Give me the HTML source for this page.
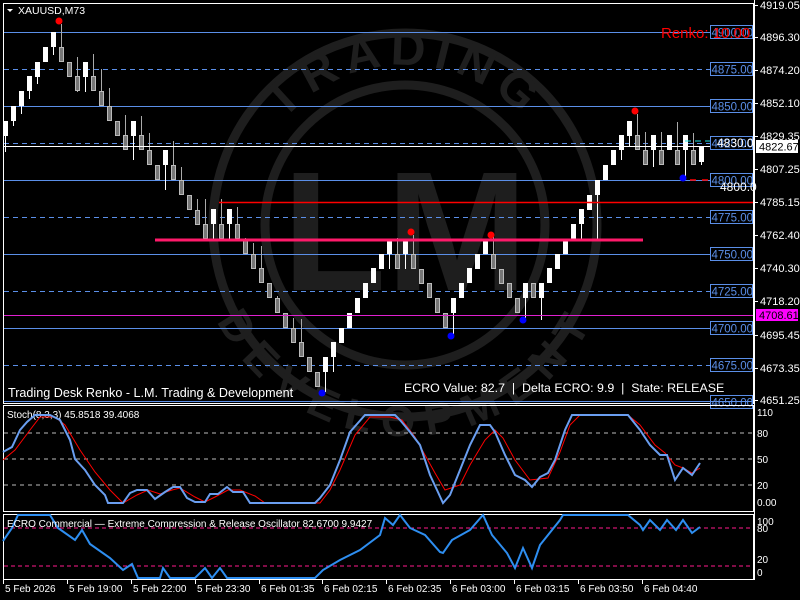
<!DOCTYPE html>
<html><head><meta charset="utf-8"><style>
html,body{margin:0;padding:0;background:#000;width:800px;height:600px;overflow:hidden}
svg{display:block;font-family:"Liberation Sans",sans-serif}
</style></head><body>
<svg id="s" width="800" height="600" viewBox="0 0 800 600" xmlns="http://www.w3.org/2000/svg">
<rect width="800" height="600" fill="#000"/>
<!-- watermark -->
<g fill="none" stroke="#1e1e1e" stroke-width="9">
<circle cx="405" cy="225" r="192"/>
<circle cx="405" cy="225" r="140"/>
</g>
<defs>
<path id="arcT" d="M245,225 A160,160 0 0 1 565,225"/>
<path id="arcB" d="M225,225 A180,180 0 0 0 585,225"/>
</defs>
<text font-size="48" fill="#1e1e1e" font-weight="bold" letter-spacing="8"><textPath href="#arcT" startOffset="50%" text-anchor="middle">TRADING</textPath></text>
<text font-size="44" fill="#1e1e1e" font-weight="bold" letter-spacing="6"><textPath href="#arcB" startOffset="50%" text-anchor="middle" dominant-baseline="hanging">DEVELOPMENT</textPath></text>
<text x="405" y="290" font-size="170" font-weight="bold" fill="#1e1e1e" text-anchor="middle">LM</text>

<!-- main frame -->
<rect x="3.5" y="3.5" width="750" height="400" fill="none" stroke="#fff"/>
<g id="grid"></g>
<g id="candles"></g>
<!-- special lines -->
<line x1="4" y1="146.5" x2="753" y2="146.5" stroke="#fff"/>
<line x1="219" y1="202.5" x2="753" y2="202.5" stroke="#f00" stroke-width="1.5"/>
<line x1="155" y1="240" x2="643" y2="240" stroke="#ff1a6a" stroke-width="3"/>
<line x1="4" y1="315.5" x2="753" y2="315.5" stroke="#e020d0"/>
<line x1="685" y1="141" x2="740" y2="141" stroke="#1ee0e0" stroke-dasharray="6,4"/>
<line x1="690" y1="180" x2="735" y2="180" stroke="#f00" stroke-dasharray="6,6" stroke-width="1.5"/>
<!-- dots -->
<g fill="#f00"><circle cx="59" cy="21" r="3.5"/><circle cx="411" cy="232" r="3.5"/><circle cx="491" cy="235" r="3.5"/><circle cx="635" cy="111" r="3.5"/></g>
<g fill="#00f"><circle cx="322" cy="393" r="3.5"/><circle cx="451" cy="336" r="3.5"/><circle cx="523" cy="320" r="3.5"/><circle cx="683" cy="178" r="3.5"/></g>
<!-- level label boxes -->
<g id="lbl" font-size="11.5" fill="#5b8fe8"></g>
<text x="661" y="38" font-size="15" fill="#f00">Renko: 10.00</text>
<text x="717" y="147" font-size="12" fill="#fff">4830.0</text>
<text x="720" y="191" font-size="12" fill="#fff">4800.0</text>
<!-- top-left -->
<path d="M7,9 L13,9 L10,12 Z" fill="#fff"/>
<text x="18" y="14" font-size="10.5" fill="#fff">XAUUSD,M73</text>
<text x="8" y="397" font-size="12.6" fill="#fff">Trading Desk Renko - L.M. Trading &amp; Development</text>
<text x="404" y="392" font-size="12.4" fill="#fff" xml:space="preserve">ECRO Value: 82.7  |  Delta ECRO: 9.9  |  State: RELEASE</text>
<line x1="4" y1="401.5" x2="753" y2="401.5" stroke="#5b8fe8"/>

<!-- right axis -->
<line x1="754.5" y1="0" x2="754.5" y2="580" stroke="#fff"/>
<g id="ax" font-size="11" fill="#fff"></g>
<rect x="756" y="140" width="42" height="13" fill="#fff"/>
<text x="759" y="150.5" font-size="11" fill="#000">4822.67</text>
<rect x="756" y="309" width="42" height="12" fill="#ff00ff"/>
<text x="759" y="319" font-size="11" fill="#000">4708.61</text>

<!-- stoch pane -->
<rect x="3.5" y="405.5" width="750" height="106" fill="none" stroke="#fff"/>
<g stroke="#bbb" stroke-dasharray="4,4"><line x1="4" y1="433" x2="753" y2="433"/><line x1="4" y1="459" x2="753" y2="459"/><line x1="4" y1="485" x2="753" y2="485"/></g>
<text x="7" y="418" font-size="10" fill="#fff">Stoch(8,3,3) 45.8518 39.4068</text>
<polyline fill="none" stroke="#f00" stroke-width="1" points="3,460 15,450 30,430 40,417 55,417 65,425 80,450 95,472 110,490 123,503 137,495 148,490 160,494 172,490 180,488 195,497 205,502 215,497 228,490 240,490 255,496 265,503 320,503 330,490 340,470 355,435 370,417 390,417 402,420 415,437 425,455 435,473 445,490 460,485 470,465 485,440 495,430 503,438 515,460 530,480 548,478 560,452 570,425 580,415 628,415 640,425 655,445 665,453 675,465 683,468 692,473 700,468"/>
<polyline fill="none" stroke="#6a9ef0" stroke-width="2" points="3,452 12,447 20,430 27,422 35,415 50,415 60,420 70,440 75,459 85,470 95,485 105,495 108,503 123,503 130,493 137,490 147,490 155,499 165,492 173,487 180,487 187,498 195,502 205,502 210,494 218,494 227,487 233,492 243,492 250,503 315,503 320,498 330,485 340,460 350,432 365,415 395,415 400,420 410,432 420,445 425,460 430,475 437,490 443,503 450,495 460,470 470,445 480,425 490,425 495,432 505,455 515,475 525,480 532,487 540,477 548,473 555,460 565,430 572,415 628,415 640,430 650,445 660,455 667,455 675,480 683,468 692,475 700,463"/>
<g font-size="10" fill="#fff"><text x="757" y="416">110</text><text x="757" y="437">80</text><text x="757" y="463">50</text><text x="757" y="489">20</text><text x="757" y="506">0.00</text></g>

<!-- ECRO pane -->
<rect x="3.5" y="514.5" width="750" height="65" fill="none" stroke="#fff"/>
<g stroke="#ff1a8c" stroke-dasharray="4,3"><line x1="4" y1="528" x2="753" y2="528"/><line x1="4" y1="566" x2="753" y2="566"/></g>
<polyline fill="none" stroke="#2e8ef0" stroke-width="2" points="3,541 12,528 18,515 50,515 58,528 75,540 82,530 90,544 110,558 123,570 132,564 138,578 160,578 163,568 170,578 195,578 205,568 212,578 220,568 227,578 315,578 323,570 340,560 360,550 380,535 385,518 393,525 400,515 410,528 425,535 440,552 443,553 452,540 470,530 483,515 492,535 507,553 515,568 523,548 532,568 540,545 560,520 563,515 628,515 640,525 643,530 650,520 660,530 667,520 676,530 683,520 692,533 700,527"/>
<text x="7" y="527" font-size="10" fill="#fff">ECRO Commercial — Extreme Compression &amp; Release Oscillator 82.6700 9.9427</text>
<g font-size="10" fill="#fff"><text x="757" y="525">100</text><text x="757" y="532">80</text><text x="757" y="563">20</text><text x="757" y="576">0</text></g>

<!-- time axis -->
<g id="tx" font-size="10" fill="#fff"></g>
</svg>
<script>
var NS="http://www.w3.org/2000/svg";
function el(p,t,a,txt){var e=document.createElementNS(NS,t);for(var k in a)e.setAttribute(k,a[k]);if(txt)e.textContent=txt;p.appendChild(e);return e;}
var g=document.getElementById('grid');
[32,106,180,254,328].forEach(function(y){el(g,'line',{x1:4,y1:y+.5,x2:753,y2:y+.5,stroke:'#5b8fe8'});});
[69,143,217,291,365].forEach(function(y){el(g,'line',{x1:4,y1:y+.5,x2:753,y2:y+.5,stroke:'#5b8fe8','stroke-dasharray':'5,4'});});
var L=document.getElementById('lbl');
[[32,'4900.00'],[69,'4875.00'],[106,'4850.00'],[143,'4825.00'],[180,'4800.00'],[217,'4775.00'],[254,'4750.00'],[291,'4725.00'],[328,'4700.00'],[365,'4675.00'],[402,'4650.00']].forEach(function(a){
el(L,'rect',{x:710.5,y:a[0]-6.5,width:42,height:13,fill:'#000',stroke:'#5b8fe8'});el(L,'text',{x:711.5,y:a[0]+4.5},a[1]);});
var A=document.getElementById('ax');
[[5,'4919.05'],[37,'4896.30'],[70,'4874.20'],[103,'4852.10'],[136,'4829.35'],[169,'4807.25'],[202,'4785.15'],[235,'4762.40'],[268,'4740.30'],[301,'4718.20'],[335,'4695.45'],[368,'4673.35'],[400,'4651.25']].forEach(function(a){
el(A,'line',{x1:754,y1:a[0]+.5,x2:758,y2:a[0]+.5,stroke:'#fff'});el(A,'text',{x:760,y:a[0]+4},a[1]);});
var T=document.getElementById('tx');
[[3,'5 Feb 2026'],[67,'5 Feb 19:00'],[131,'5 Feb 22:00'],[195,'5 Feb 23:30'],[259,'6 Feb 01:35'],[322,'6 Feb 02:15'],[386,'6 Feb 02:35'],[450,'6 Feb 03:00'],[514,'6 Feb 03:15'],[578,'6 Feb 03:50'],[642,'6 Feb 04:40']].forEach(function(a){
el(T,'line',{x1:a[0]+.5,y1:580,x2:a[0]+.5,y2:584,stroke:'#fff'});el(T,'text',{x:a[0]+2,y:592},a[1]);});
var C=[[3,121,1,0,152],[11,106,1,0,126],[19,91,1,0,114],[27,76,1,0,99],[35,62,1,0,84],[43,47,1,0,0],[51,32,1,0,55],[59,47,0,24,0],[67,62,0,0,0],[75,76,0,57,92],[83,62,1,0,92],[91,76,0,54,0],[99,91,0,69,0],[107,106,0,88,0],[115,121,0,0,0],[123,135,0,115,0],[131,121,1,0,160],[139,135,0,116,0],[147,150,0,133,0],[155,165,0,0,0],[163,150,1,0,190],[171,165,0,141,0],[179,180,0,167,0],[187,195,0,0,0],[195,210,0,199,0],[203,224,0,199,0],[211,209,1,0,239],[219,224,0,199,0],[227,209,1,0,239],[235,224,0,207,0],[243,239,0,238,0],[251,254,0,243,0],[259,268,0,246,0],[267,283,0,294,0],[275,298,0,296,0],[283,313,0,0,0],[291,328,0,318,0],[299,342,0,319,0],[307,357,0,0,0],[315,372,0,0,0],[323,357,1,0,392],[331,342,1,0,372],[339,328,1,0,0],[347,313,1,0,0],[355,298,1,0,0],[363,283,1,0,0],[371,268,1,0,0],[379,254,1,0,0],[387,239,1,0,269],[395,254,0,238,0],[403,239,1,0,269],[411,254,0,235,0],[419,269,0,0,0],[427,283,0,0,0],[435,298,0,0,0],[443,313,0,0,0],[451,298,1,0,336],[459,283,1,0,0],[467,268,1,0,283],[475,254,1,0,0],[483,239,1,0,0],[491,254,0,236,0],[499,269,0,0,0],[507,283,0,0,0],[515,298,0,0,0],[523,283,1,0,318],[531,283,0,283,0],[539,283,1,0,320],[547,268,1,0,0],[555,254,1,0,0],[563,239,1,0,252],[571,224,1,0,0],[579,209,1,0,240],[587,195,1,0,205],[595,180,1,0,240],[603,165,1,0,0],[611,150,1,0,0],[619,135,1,0,160],[627,121,1,0,146],[635,135,0,114,0],[643,150,0,132,0],[651,135,1,0,167],[659,150,0,132,0],[667,135,1,0,0],[675,150,0,122,0],[683,135,1,0,177],[691,150,0,133,0],[699,147,1,0,165]];
var K=document.getElementById('candles');
C.forEach(function(c){var x=c[0],t=c[1];
if(c[3])el(K,'line',{x1:x+2.5,y1:c[3],x2:x+2.5,y2:t,stroke:c[2]?'#fff':'#aaa'});
if(c[4])el(K,'line',{x1:x+2.5,y1:t+15,x2:x+2.5,y2:c[4],stroke:c[2]?'#fff':'#aaa'});
if(c[2])el(K,'rect',{x:x,y:t,width:5,height:15,fill:'#fff'});
else el(K,'rect',{x:x+.5,y:t+.5,width:4,height:14,fill:'#777',stroke:'#bbb'});
});
</script>
</body></html>
